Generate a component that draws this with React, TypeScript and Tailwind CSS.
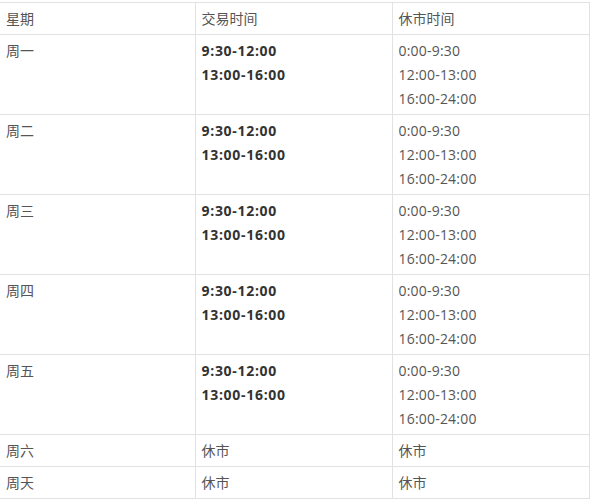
const weekdays = ["周一", "周二", "周三", "周四", "周五"];

const rest = [
  { day: "周六", trade: "休市", close: "休市" },
  { day: "周天", trade: "休市", close: "休市" },
];

export default function App() {
  return (
    <main className="min-h-screen bg-white pt-[2px] font-['Open_Sans','Noto_Sans_CJK_SC',sans-serif] text-[14px] leading-[24px] text-[#555]">
      <table className="w-[589px] table-fixed border-collapse">
        <colgroup>
          <col className="w-[195px]" />
          <col className="w-[197px]" />
          <col className="w-[197px]" />
        </colgroup>
        <thead>
          <tr className="border-y border-[#e2e2e2]">
            <th className="px-[6px] pt-[4px] pb-[3px] text-left font-normal">星期</th>
            <th className="border-l border-[#e2e2e2] px-[6px] pt-[4px] pb-[3px] text-left font-normal">交易时间</th>
            <th className="border-x border-[#e2e2e2] px-[6px] pt-[4px] pb-[3px] text-left font-normal">休市时间</th>
          </tr>
        </thead>
        <tbody>
          {weekdays.map((day) => (
            <tr key={day} className="border-b border-[#e2e2e2] align-top">
              <td className="px-[6px] pt-[4px] pb-[3px]">{day}</td>
              <td className="border-l border-[#e2e2e2] px-[6px] pt-[4px] pb-[3px] font-bold tracking-[0.7px] text-[#333]">
                <div>9:30-12:00</div>
                <div>13:00-16:00</div>
              </td>
              <td className="border-x border-[#e2e2e2] px-[6px] pt-[4px] pb-[3px] tracking-[0.2px]">
                <div>0:00-9:30</div>
                <div>12:00-13:00</div>
                <div>16:00-24:00</div>
              </td>
            </tr>
          ))}
          {rest.map((r) => (
            <tr key={r.day} className="border-b border-[#e2e2e2] align-top">
              <td className="px-[6px] pt-[4px] pb-[3px]">{r.day}</td>
              <td className="border-l border-[#e2e2e2] px-[6px] pt-[4px] pb-[3px]">{r.trade}</td>
              <td className="border-x border-[#e2e2e2] px-[6px] pt-[4px] pb-[3px]">{r.close}</td>
            </tr>
          ))}
        </tbody>
      </table>
    </main>
  );
}
